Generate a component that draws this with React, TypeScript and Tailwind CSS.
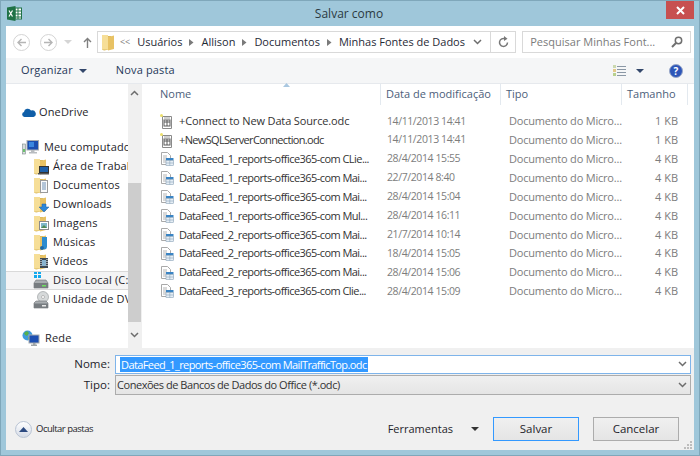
import type { ReactNode } from 'react';

const files = [
    { name: '+Connect to New Data Source.odc', date: '14/11/2013 14:41', size: '1 KB', star: true, track: 'tracking-[-0.14px]' },
    { name: '+NewSQLServerConnection.odc', date: '14/11/2013 14:41', size: '1 KB', star: true, track: 'tracking-[-0.66px]' },
    { name: 'DataFeed_1_reports-office365-com CLie...', date: '28/4/2014 15:55', size: '4 KB' },
    { name: 'DataFeed_1_reports-office365-com Mai...', date: '22/7/2014 8:40', size: '4 KB' },
    { name: 'DataFeed_1_reports-office365-com Mai...', date: '28/4/2014 15:04', size: '4 KB' },
    { name: 'DataFeed_1_reports-office365-com Mul...', date: '28/4/2014 16:11', size: '4 KB' },
    { name: 'DataFeed_2_reports-office365-com Mai...', date: '21/7/2014 10:14', size: '4 KB' },
    { name: 'DataFeed_2_reports-office365-com Mai...', date: '18/4/2014 15:05', size: '4 KB' },
    { name: 'DataFeed_2_reports-office365-com Mai...', date: '28/4/2014 15:06', size: '4 KB' },
    { name: 'DataFeed_3_reports-office365-com Clie...', date: '28/4/2014 15:09', size: '4 KB' },
];

function Chevron({ className = '' }: { className?: string }) {
    return (
        <svg width="9" height="6" viewBox="0 0 9 6" className={className}>
            <path d="M1 1l3.500 3.500L8 1" fill="none" stroke="#6d6d6d" strokeWidth="1.500" />
        </svg>
    );
}

function Tri({ color = '#4a5a78' }: { color?: string }) {
    return (
        <svg width="8" height="4" viewBox="0 0 8 4">
            <path d="M0 0h8L4 4z" fill={color} />
        </svg>
    );
}

function Crumb() {
    return (
        <svg width="5" height="7" viewBox="0 0 5 7" className="mx-[7px]">
            <path d="M0 0l4.500 3.500L0 7z" fill="#7a7a7a" />
        </svg>
    );
}

function ExcelLogo() {
    return (
        <svg width="15" height="15" viewBox="0 0 15 15">
            <rect x="5" y="2" width="9.500" height="11" fill="#fff" stroke="#1f7246" strokeWidth="1" />
            <path d="M8 2v11M11 2v11M5 5h9M5 8h9M5 11h9" stroke="#1f7246" strokeWidth="1" />
            <path d="M0 1.500L8.500 0v15L0 13.500z" fill="#1f7246" />
            <path d="M2 4.500l3.500 6M5.500 4.500l-3.500 6" stroke="#fff" strokeWidth="1.200" />
        </svg>
    );
}

function FolderBase({ children }: { children?: ReactNode }) {
    return (
        <svg width="16" height="17" viewBox="0 0 16 17">
            <path d="M1 1h3l1 1h5v13l-7 1.500-2-1z" fill="#d8b75c" />
            <path d="M1 1h6v14.500H1z" fill="#f6de97" />
            <path d="M7 3l6-1.500V15l-6 1.500z" fill="#e8c264" />
            {children}
        </svg>
    );
}

function SideIcon({ kind }: { kind: string }) {
    if (kind === 'desktop')
        return (
            <FolderBase>
                <rect x="6.500" y="8.500" width="9" height="6" fill="#1d5fa8" stroke="#333" strokeWidth="1" />
                <rect x="5" y="15" width="11" height="1.500" fill="#555" />
            </FolderBase>
        );
    if (kind === 'docs')
        return (
            <FolderBase>
                <rect x="7.500" y="3.500" width="7" height="12" fill="#fbfbfb" stroke="#9a9a9a" strokeWidth="1" />
                <path d="M9 6h4M9 8h4M9 10h4M9 12h4" stroke="#6d8fb5" strokeWidth="1" />
            </FolderBase>
        );
    if (kind === 'down')
        return (
            <FolderBase>
                <path d="M9 8h4v3h3l-5 5-5-5h3z" fill="#2c86d8" stroke="#1c5fa3" strokeWidth=".5" />
            </FolderBase>
        );
    if (kind === 'img')
        return (
            <FolderBase>
                <rect x="6.500" y="6.500" width="9" height="8" fill="#fff" stroke="#8b8b8b" strokeWidth="1" />
                <rect x="8" y="8" width="6" height="5" fill="#7fb7c8" />
                <path d="M8 13l3-3 3 3z" fill="#4f8a55" />
            </FolderBase>
        );
    if (kind === 'music')
        return (
            <FolderBase>
                <path d="M9 3h5v10a2.500 2.500 0 0 1-5 0z" fill="#2d8ccf" />
                <circle cx="9" cy="14" r="2" fill="#1e6aa6" />
            </FolderBase>
        );
    if (kind === 'video')
        return (
            <FolderBase>
                <rect x="7" y="5" width="8" height="10" fill="#3e4a55" />
                <rect x="9" y="7" width="4" height="6" fill="#89b4cf" />
                <path d="M8 6v8M14 6v8" stroke="#fff" strokeWidth="1" strokeDasharray="1 1" />
            </FolderBase>
        );
    if (kind === 'disk')
        return (
            <svg width="16" height="19" viewBox="0 0 16 19">
                <path d="M1 0h3v3H1zM5 0h3v3H5zM1 4h3v3H1zM5 4h3v3H5z" fill="#12a9ee" />
                <path d="M1 12l2-3h10l2 3v5H1z" fill="#a9adb0" stroke="#6c7074" strokeWidth=".6" />
                <rect x="1" y="12" width="14" height="5" fill="#777c80" />
                <rect x="9" y="14" width="4" height="1.500" fill="#6fe05f" />
            </svg>
        );
    if (kind === 'dvd')
        return (
            <svg width="16" height="18" viewBox="0 0 16 18">
                <circle cx="10" cy="6" r="5.500" fill="#d6d9da" stroke="#8f9496" strokeWidth=".6" />
                <circle cx="10" cy="6" r="1.500" fill="#fff" stroke="#888" strokeWidth=".5" />
                <path d="M1 12l2-2h10l2 2v5H1z" fill="#a9adb0" stroke="#6c7074" strokeWidth=".6" />
                <rect x="1" y="12.500" width="14" height="4.500" fill="#777c80" />
                <rect x="9" y="14" width="4" height="1.500" fill="#e8e8e8" />
            </svg>
        );
    if (kind === 'cloud')
        return (
            <svg width="14" height="9" viewBox="0 0 14 9">
                <path d="M2.500 9A2.500 2.500 0 0 1 2 4.100 3.800 3.800 0 0 1 9 2.500 3.200 3.200 0 0 1 11.500 9z" fill="#0f5ea8" />
            </svg>
        );
    if (kind === 'pc')
        return (
            <svg width="17" height="15" viewBox="0 0 17 15">
                <rect x="0.500" y="4" width="3" height="10" fill="#d8dcdc" stroke="#7c8a8a" strokeWidth=".6" />
                <rect x="1" y="9" width="2" height="3" fill="#6dc36d" />
                <rect x="5" y="0.500" width="11.500" height="9.500" fill="#1c4fb0" stroke="#a9adb0" strokeWidth="1" />
                <path d="M7 2h5v5H7z" fill="#3b87df" />
                <path d="M9 10h3.500v2H15v1.500H7V12h2z" fill="#b8bcbf" />
            </svg>
        );
    return (
        <svg width="18" height="17" viewBox="0 0 18 17">
            <circle cx="5.500" cy="5.500" r="5" fill="#3f9bdc" />
            <path d="M2 3l3-2 2 2-2 3-2-1zM6 7l3 1-1 2-2-1z" fill="#56b04b" />
            <rect x="7" y="5" width="10" height="8" fill="#1d4fb2" stroke="#a6abad" strokeWidth="1" />
            <path d="M11 13h2.500v1.500H15V16H9v-1.500h2z" fill="#9fa5a8" />
        </svg>
    );
}

function SideRow({ icon, label, indent = false, selected = false, textClass = 'ml-[4px]' }: { icon: string; label: string; indent?: boolean; selected?: boolean; textClass?: string }) {
    return (
        <div className={`flex h-[19px] items-center whitespace-nowrap overflow-hidden ${selected ? 'bg-[#f4f4f5] border-y border-[#d9d9d9]' : ''} ${indent ? 'pl-[27px]' : 'pl-[16px]'}`}>
            <div className="flex items-center justify-start shrink-0">
                <SideIcon kind={icon} />
            </div>
            <span className={textClass}>{label}</span>
        </div>
    );
}

function FileIcon({ star }: { star?: boolean }) {
    if (star)
        return (
            <svg width="14" height="15" viewBox="0 0 14 15">
                <path d="M2.500 2.500h9v12h-9z" fill="#fff" stroke="#8a8a8a" strokeWidth="1" />
                <rect x="4" y="6" width="6" height="6" fill="#fff" stroke="#5a5a5a" strokeWidth="1" />
                <path d="M4 8h6M7 6v6" stroke="#5a5a5a" strokeWidth="1" />
                <path d="M4 4h6" stroke="#a0a0a0" strokeWidth="1" />
                <circle cx="1.500" cy="1.500" r="1.500" fill="#ecdf6a" />
            </svg>
        );
    return (
        <svg width="14" height="14" viewBox="0 0 14 14">
            <path d="M1.500.5h6l3 3v9h-9z" fill="#fff" stroke="#a9a9a9" strokeWidth="1" />
            <path d="M3 4h4M3 6h4M3 8h3M3 10h3" stroke="#b4b4b4" strokeWidth="1" />
            <rect x="6" y="6" width="7.500" height="2.500" fill="#3a84c4" />
            <rect x="6" y="8.500" width="7.500" height="5" fill="#e6eef5" stroke="#8aa3b8" strokeWidth=".6" />
            <path d="M9.800 8.500v5M6 11h7.500" stroke="#8aa3b8" strokeWidth=".6" />
        </svg>
    );
}

function HeaderCell({ label, className }: { label: string; className: string }) {
    return (
        <div className={`h-[21px] border-r border-[#e3e9ef] text-[#4c607a] whitespace-nowrap flex items-center ${className}`}>
            {label}
        </div>
    );
}

export default function App() {
    return (
        <div
            className="w-[700px] h-[456px] bg-[#9fc7da] border border-[#7fa7ba] flex flex-col overflow-hidden text-[11px] text-[#1e1e2a]"
            style={{ fontFamily: '"Open Sans", "Noto Sans", sans-serif' }}
        >
            {/* Title bar */}
            <div className="relative h-[25px] shrink-0 flex items-center justify-center text-[12px] text-[#2c3a42]">
                <div className="absolute left-[6px] top-[5px]">
                    <ExcelLogo />
                </div>
                <span className="-translate-x-[1px]">Salvar como</span>
                <div className="absolute right-[5px] top-0 w-[28px] h-[18px] bg-[#c75050] flex items-center justify-center">
                    <svg width="9" height="9" viewBox="0 0 9 9">
                        <path d="M1 1l7 7M8 1l-7 7" stroke="#fff" strokeWidth="2" />
                    </svg>
                </div>
            </div>

            <div className="flex-1 mx-[5px] mb-[5px] flex flex-col bg-[#f0f0f0] min-h-0">
                {/* Address row */}
                <div className="h-[32px] shrink-0 bg-white flex items-center pl-[7px] pr-[3px]">
                    <div className="w-[17px] h-[17px] rounded-full border border-[#d4d4d4] flex items-center justify-center">
                        <svg width="9" height="9" viewBox="0 0 9 9">
                            <path d="M4.500 1L1 4.500 4.500 8M1 4.500h8" fill="none" stroke="#b5b5b5" strokeWidth="1.400" />
                        </svg>
                    </div>
                    <div className="ml-[10px] w-[17px] h-[17px] rounded-full border border-[#d4d4d4] flex items-center justify-center">
                        <svg width="9" height="9" viewBox="0 0 9 9">
                            <path d="M4.500 1L8 4.500 4.500 8M8 4.500H0" fill="none" stroke="#b5b5b5" strokeWidth="1.400" />
                        </svg>
                    </div>
                    <div className="ml-[7px]">
                        <Tri color="#d5d5d5" />
                    </div>
                    <svg width="9" height="11" viewBox="0 0 9 11" className="ml-[11px]">
                        <path d="M4.500 11V1.500M1 5l3.500-3.500L8 5" fill="none" stroke="#7f7f7f" strokeWidth="1.400" />
                    </svg>
                    <div className="ml-[5px] w-[420px] h-[22px] border border-[#d9d9d9] flex items-center text-[11px] text-[#1f2a36] whitespace-nowrap">
                        <div className="ml-[3px]">
                            <FolderBase />
                        </div>
                        <span className="ml-[3px] text-[#7a7a7a] text-[9px]">{'<<'}</span>
                        <span className="ml-[7px]">Usuários</span>
                        <Crumb />
                        <span>Allison</span>
                        <Crumb />
                        <span>Documentos</span>
                        <Crumb />
                        <span>Minhas Fontes de Dados</span>
                        <Chevron className="ml-auto mr-[8px]" />
                        <div className="w-[25px] h-full border-l border-[#d9d9d9] flex items-center justify-center">
                            <svg width="11" height="12" viewBox="0 0 11 12">
                                <path d="M9.500 6.500A4 4 0 1 1 7 2.700" fill="none" stroke="#777" strokeWidth="1.500" />
                                <path d="M6 0l3.500 2.800L6 5z" fill="#777" />
                            </svg>
                        </div>
                    </div>
                    <div className="ml-[6px] w-[169px] h-[22px] border border-[#d9d9d9] flex items-center pl-[7px] text-[#7b7b7b] whitespace-nowrap">
                        <span>Pesquisar Minhas Font...</span>
                        <svg width="12" height="12" viewBox="0 0 12 12" className="ml-auto mr-[7px]">
                            <circle cx="7.500" cy="4.500" r="3.200" fill="none" stroke="#6f6f6f" strokeWidth="1.500" />
                            <path d="M5 7l-4 4" stroke="#6f6f6f" strokeWidth="2" />
                        </svg>
                    </div>
                </div>

                {/* Toolbar */}
                <div className="h-[26px] shrink-0 bg-[#f5f6f7] border-b border-[#e6e9ed] flex items-center pl-[15px] text-[#26395a] tracking-[0.15px]">
                    <span>Organizar</span>
                    <div className="ml-[6px]">
                        <Tri color="#33476b" />
                    </div>
                    <span className="ml-[29px]">Nova pasta</span>
                    <svg width="13" height="11" viewBox="0 0 13 11" className="ml-auto">
                        <path d="M4 1.500h9M4 4.500h9M4 7.500h9M4 10.500h9" stroke="#8a97a5" strokeWidth="1" />
                        <rect x="0" y="0" width="3" height="3" fill="#cbd9b0" />
                        <rect x="0" y="4" width="3" height="3" fill="#e4c98a" />
                        <rect x="0" y="8" width="3" height="3" fill="#b8d08e" />
                    </svg>
                    <div className="ml-[10px]">
                        <Tri color="#33476b" />
                    </div>
                    <div className="ml-[25px] mr-[11px] w-[14px] h-[14px] rounded-full bg-[#2d56b8] border border-[#9aa8c8] flex items-center justify-center text-white text-[10px] font-bold leading-none">
                        ?
                    </div>
                </div>

                {/* Main */}
                <div className="h-[264px] shrink-0 flex">
                    {/* Sidebar */}
                    <div className="w-[122px] shrink-0 bg-white pt-[19px] flex flex-col overflow-hidden tracking-[0.15px]">
                        <SideRow icon="cloud" label="OneDrive" textClass="ml-[3px]" />
                        <div className="h-[16px]" />
                        <SideRow icon="pc" label="Meu computador" textClass="ml-[5px]" />
                        <SideRow icon="desktop" label="Área de Trabalho" indent />
                        <SideRow icon="docs" label="Documentos" indent />
                        <SideRow icon="down" label="Downloads" indent />
                        <SideRow icon="img" label="Imagens" indent />
                        <SideRow icon="music" label="Músicas" indent />
                        <SideRow icon="video" label="Vídeos" indent />
                        <SideRow icon="disk" label="Disco Local (C:)" indent selected />
                        <SideRow icon="dvd" label="Unidade de DVD" indent />
                        <div className="h-[20px]" />
                        <SideRow icon="net" label="Rede" textClass="ml-[5px]" />
                    </div>

                    {/* Scrollbar */}
                    <div className="w-[13px] shrink-0 bg-[#f0f0f0] flex flex-col items-center">
                        <div className="h-[17px] flex items-center justify-center">
                            <Chevron className="rotate-180" />
                        </div>
                        <div className="h-[82px]" />
                        <div className="w-full h-[139px] bg-[#cdcdcd]" />
                        <div className="flex-1 flex items-center justify-center">
                            <Chevron />
                        </div>
                    </div>

                    {/* File list */}
                    <div className="flex-1 ml-[1px] bg-white flex flex-col min-w-0">
                        <div className="relative h-[21px] flex shrink-0">
                            <div className="absolute left-[141px] -top-[1px]">
                                <svg width="7" height="4" viewBox="0 0 7 4">
                                    <path d="M0 4l3.500-4L7 4z" fill="#a9c7e0" />
                                </svg>
                            </div>
                            <HeaderCell label="Nome" className="w-[239px] pl-[18px]" />
                            <HeaderCell label="Data de modificação" className="w-[120px] pl-[5px]" />
                            <HeaderCell label="Tipo" className="w-[121px] pl-[5px]" />
                            <HeaderCell label="Tamanho" className="w-[66px] pl-[5px]" />
                        </div>
                        <div className="pt-[7px] flex flex-col">
                            {files.map((f, i) => (
                                <div key={i} className="h-[18.9px] flex items-center whitespace-nowrap">
                                    <div className="w-[238px] pl-[18px] flex items-center text-[#333]">
                                        <div className="w-[15px] shrink-0 flex">
                                            <FileIcon star={f.star} />
                                        </div>
                                        <span className={`ml-[4px] ${f.track ?? 'tracking-[-0.55px]'}`}>{f.name}</span>
                                    </div>
                                    <div className="w-[122px] pl-[7px] text-[10.5px] text-[#7d7d7d] tracking-[-0.4px]">{f.date}</div>
                                    <div className="w-[119px] pl-[7px] text-[#7d7d7d] tracking-[-0.2px]">Documento do Micro...</div>
                                    <div className="w-[57px] text-right text-[#7d7d7d]">{f.size}</div>
                                </div>
                            ))}
                        </div>
                    </div>
                </div>

                {/* Bottom form */}
                <div className="flex-1 flex flex-col relative min-h-0">
                    <div className="mt-[6px] flex items-center h-[20px]">
                        <div className="w-[104px] text-right text-[11.5px]">Nome:</div>
                        <div className="ml-[5px] w-[576px] h-[19px] bg-white border border-[#7eb4ea] flex items-center pl-[4px] whitespace-nowrap">
                            <span className="bg-[#3399ff] text-white h-[15px] leading-[15px] px-[1px] tracking-[-0.6px]">DataFeed_1_reports-office365-com MailTrafficTop.odc</span>
                            <Chevron className="ml-auto mr-[3px]" />
                        </div>
                    </div>
                    <div className="mt-[1px] flex items-center h-[20px]">
                        <div className="w-[104px] text-right text-[11.5px]">Tipo:</div>
                        <div className="ml-[5px] w-[576px] h-[20px] bg-gradient-to-b from-[#f0f0f0] to-[#e5e5e5] border border-[#acacac] flex items-center pl-[1px] whitespace-nowrap text-[#333] tracking-[-0.46px]">
                            <span>Conexões de Bancos de Dados do Office (*.odc)</span>
                            <Chevron className="ml-auto mr-[3px]" />
                        </div>
                    </div>
                    <div className="mt-auto mb-[9px] flex items-center pl-[9px] pr-[15px]">
                        <div className="w-[17px] h-[17px] rounded-full border border-[#b9c4d4] bg-gradient-to-b from-white to-[#d5dbe6] flex items-center justify-center">
                            <svg width="9" height="5" viewBox="0 0 9 5">
                                <path d="M0 5l4.500-5L9 5z" fill="#2c4a80" />
                            </svg>
                        </div>
                        <span className="ml-[4px] text-[9.5px] tracking-[-0.5px]">Ocultar pastas</span>
                        <span className="ml-auto">Ferramentas</span>
                        <div className="ml-[18px] mr-[14px]">
                            <Tri color="#333" />
                        </div>
                        <div className="w-[86px] h-[24px] border border-[#3399ff] bg-gradient-to-b from-[#f0f0f0] to-[#e5e5e5] flex items-center justify-center text-[11.5px]">Salvar</div>
                        <div className="ml-[14px] w-[86px] h-[24px] border border-[#acacac] bg-gradient-to-b from-[#f0f0f0] to-[#e5e5e5] flex items-center justify-center text-[11.5px]">Cancelar</div>
                    </div>
                    {/* Resize grip */}
                    <svg width="8" height="8" viewBox="0 0 8 8" className="absolute right-[2px] bottom-[1px]">
                        <path d="M6 0h2v2H6zM3 3h2v2H3zM6 3h2v2H6zM0 6h2v2H0zM3 6h2v2H3zM6 6h2v2H6z" fill="#bdbdbd" />
                    </svg>
                </div>
            </div>
        </div>
    );
}
